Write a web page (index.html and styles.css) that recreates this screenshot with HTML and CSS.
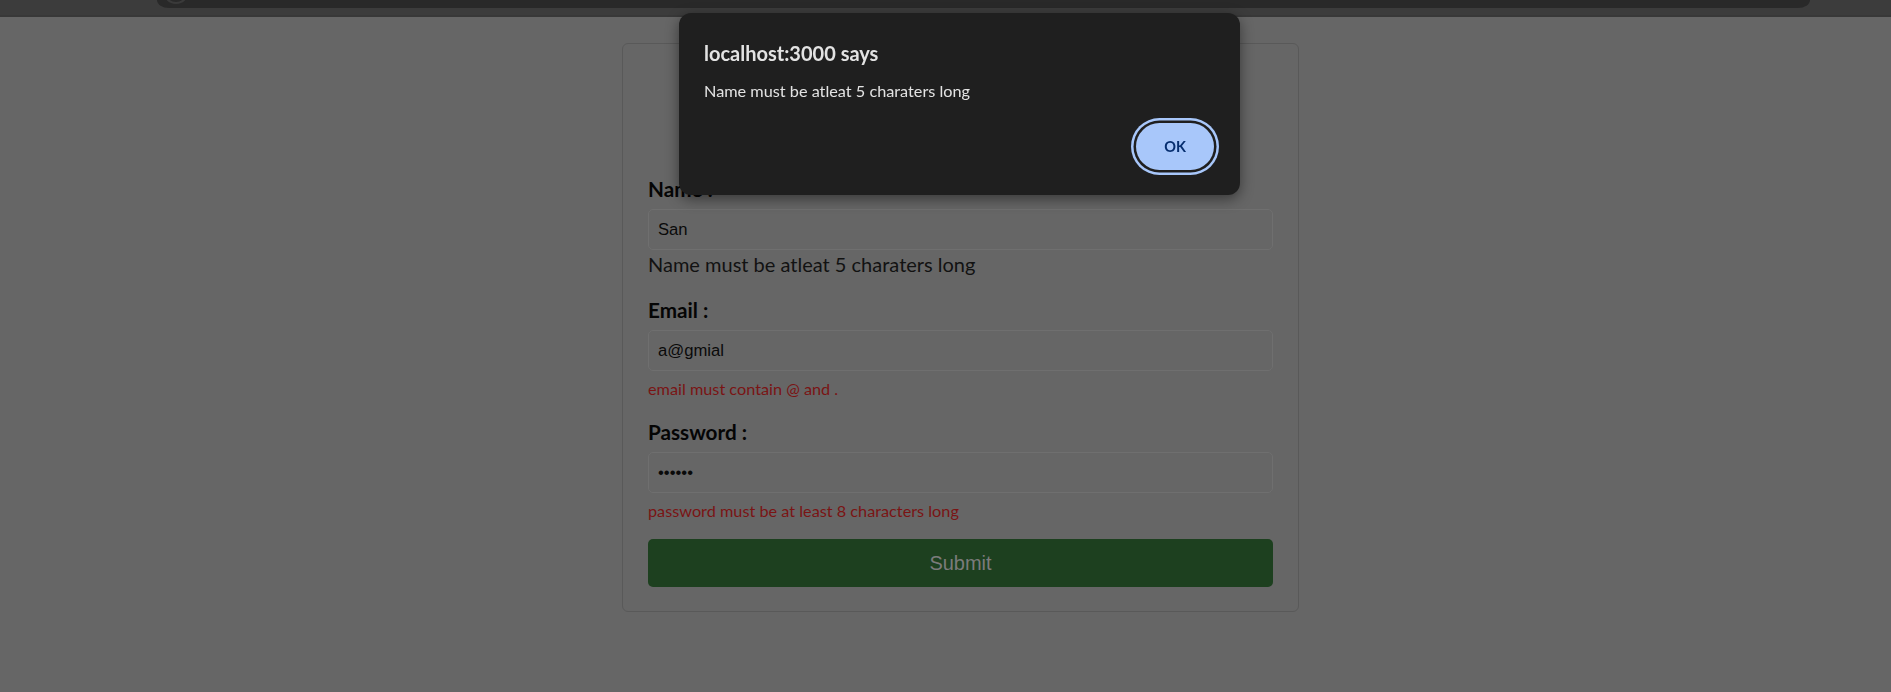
FILE: index.html
```html
<!DOCTYPE html>
<html lang="en">
<head>
<meta charset="utf-8">
<title>Form</title>
<link rel="stylesheet" href="styles.css">
</head>
<body>
  <header class="chrome">
    <div class="address-bar"><span class="site-icon"></span></div>
  </header>

  <main class="page">
    <form class="card">
      <div class="field">
        <label class="label" for="name">Name :</label>
        <input class="input" id="name" type="text" value="San">
        <div class="error-plain">Name must be atleat 5 charaters long</div>
      </div>
      <div class="field">
        <label class="label" for="email">Email :</label>
        <input class="input" id="email" type="text" value="a@gmial">
        <div class="error">email must contain @ and .</div>
      </div>
      <div class="field field-last">
        <label class="label" for="password">Password :</label>
        <input class="input" id="password" type="password" value="123456">
        <div class="error">password must be at least 8 characters long</div>
      </div>
      <button class="submit" type="button">Submit</button>
    </form>
  </main>

  <div class="dialog" role="alertdialog">
    <div class="dialog-title">localhost:3000 says</div>
    <div class="dialog-message">Name must be atleat 5 charaters long</div>
    <div class="dialog-footer">
      <button class="ok" type="button">OK</button>
    </div>
  </div>
</body>
</html>
```
FILE: styles.css
```css
html, body {
  margin: 0;
  padding: 0;
}

body {
  background: #666666;
  font-family: "Lato", "Noto Sans", sans-serif;
  overflow: hidden;
  height: 692px;
}

/* browser chrome strip at the top */
.chrome {
  height: 15px;
  background: #3c3c3c;
  border-bottom: 2px solid #383838;
  display: flex;
  align-items: flex-start;
  padding: 0 81px 0 157px;
}

.address-bar {
  position: relative;
  flex: 1;
  height: 8px;
  background: #292929;
  border-radius: 0 0 12px 12px / 0 0 8px 8px;
  overflow: hidden;
}

.site-icon {
  position: absolute;
  left: 6px;
  top: -22px;
  width: 26px;
  height: 26px;
  border-radius: 50%;
  border: 2px solid #3a3a3a;
  box-sizing: border-box;
}

/* page content */
.page {
  display: flex;
  justify-content: center;
  padding-left: 30px;
  padding-top: 26px;
}

.card {
  width: 677px;
  box-sizing: border-box;
  border: 1px solid #595959;
  border-radius: 6px;
  padding: 133px 25px 24px 25px;
  display: flex;
  flex-direction: column;
}

.field {
  display: flex;
  flex-direction: column;
  margin-bottom: 21px;
}

.field-last {
  margin-bottom: 18px;
}

.label {
  font-weight: 700;
  font-size: 20.7px;
  line-height: 25px;
  color: #050505;
  margin-bottom: 7px;
}

.input {
  height: 41px;
  box-sizing: border-box;
  margin: 0;
  padding: 0 9px;
  border: 1px solid #6f6f6f;
  border-radius: 5px;
  background: #666666;
  color: #0a0a0a;
  font-family: "Liberation Sans", Arial, sans-serif;
  font-size: 16.67px;
  outline: none;
}

.error-plain {
  margin-top: 1px;
  font-size: 20px;
  line-height: 26px;
  color: #121212;
}

.error {
  margin-top: 8px;
  font-size: 16.25px;
  line-height: 20px;
  color: #7a1414;
}

.submit {
  height: 48px;
  margin: 0;
  border: none;
  border-radius: 5px;
  background: #1d401f;
  color: #7b7b7b;
  font-family: "Liberation Sans", Arial, sans-serif;
  font-size: 20px;
}

/* JS alert dialog overlay */
.dialog {
  position: fixed;
  left: 679px;
  top: 13px;
  width: 561px;
  box-sizing: border-box;
  padding: 28px 26px 25px 25px;
  background: #1f1f1f;
  border-radius: 12px;
  box-shadow: 0 4px 14px rgba(0, 0, 0, 0.45);
  color: #e3e3e3;
}

.dialog-title {
  font-weight: 700;
  font-size: 20px;
  line-height: 24px;
}

.dialog-message {
  margin-top: 16px;
  font-size: 16.25px;
  line-height: 20px;
}

.dialog-footer {
  margin-top: 22px;
  display: flex;
  justify-content: flex-end;
}

.ok {
  width: 78px;
  height: 47px;
  border: none;
  border-radius: 24px;
  background: #a8c7fa;
  color: #062e6f;
  font-family: "Lato", sans-serif;
  font-weight: 700;
  font-size: 14.5px;
  box-shadow: 0 0 0 2.5px #1f1f1f, 0 0 0 5px #a8c7fa;
}
```
